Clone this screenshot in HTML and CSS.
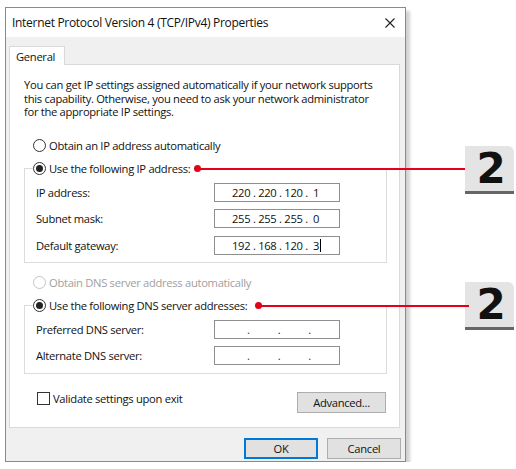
FILE: index.html
```html
<!DOCTYPE html>
<html lang="en">
<head>
<meta charset="utf-8">
<title>Internet Protocol Version 4 (TCP/IPv4) Properties</title>
<link rel="stylesheet" href="styles.css">
</head>
<body>
<div class="page">
  <div class="dialog">
    <div class="titlebar">
      <span class="title">Internet Protocol Version 4 (TCP/IPv4) Properties</span>
      <svg class="close" width="10" height="10" viewBox="0 0 10 10"><path d="M0.5 0.5 L9.5 9.5 M9.5 0.5 L0.5 9.5" stroke="#222" stroke-width="1.1" fill="none"/></svg>
    </div>
    <div class="tabs"><div class="tab">General</div></div>
    <div class="panel">
      <p class="desc">You can get IP settings assigned automatically if your network supports<br>this capability. Otherwise, you need to ask your network administrator<br>for the appropriate IP settings.</p>
      <div class="option"><span class="radio"></span><span>Obtain an IP address automatically</span></div>
      <fieldset class="group">
        <legend class="option"><span class="radio checked"></span><span>Use the following IP address:</span><span class="dot dot-ip"><span class="line line-ip"></span></span></legend>
        <div class="field"><span class="label">IP address:</span><span class="ip"><span class="ipv">220 . 220 . 120 .&nbsp; 1</span></span></div>
        <div class="field"><span class="label">Subnet mask:</span><span class="ip"><span class="ipv">255 . 255 . 255 .&nbsp; 0</span></span></div>
        <div class="field"><span class="label">Default gateway:</span><span class="ip"><span class="ipv">192 . 168 . 120 .&nbsp; 3<span class="caret"></span></span></span></div>
      </fieldset>
      <div class="option disabled"><span class="radio"></span><span>Obtain DNS server address automatically</span></div>
      <fieldset class="group group-dns">
        <legend class="option"><span class="radio checked"></span><span>Use the following DNS server addresses:</span><span class="dot dot-dns"><span class="line line-dns"></span></span></legend>
        <div class="field"><span class="label">Preferred DNS server:</span><span class="ip empty"><span>.</span><span>.</span><span>.</span></span></div>
        <div class="field"><span class="label">Alternate DNS server:</span><span class="ip empty"><span>.</span><span>.</span><span>.</span></span></div>
      </fieldset>
      <div class="bottomrow">
        <div class="check"><span class="box"></span><span>Validate settings upon exit</span></div>
        <button class="btn adv" type="button">Advanced...</button>
      </div>
    </div>
    <div class="footer">
      <button class="btn ok" type="button">OK</button>
      <button class="btn" type="button">Cancel</button>
    </div>
  </div>
  <div class="badges">
    <div class="badge">2</div>
    <div class="badge">2</div>
  </div>
</div>
</body>
</html>
```
FILE: styles.css
```css
* { box-sizing: border-box; }
html, body { margin: 0; padding: 0; background: #fff; }
body {
  font-family: "Open Sans", "Noto Sans", sans-serif;
  font-size: 11.2px;
  letter-spacing: -0.3px;
  color: #111;
}
.page { display: flex; align-items: flex-start; padding: 7px 0 0 5px; }
.dialog {
  width: 401px;
  border: 1px solid #8a8a8a;
  background: #f0f0f0;
  box-shadow: 4px 4px 3px rgba(0,0,0,0.18);
  padding-bottom: 2px;
}
.titlebar {
  height: 29px;
  background: #fff;
  display: flex;
  align-items: center;
  justify-content: space-between;
  padding: 0 10px 0 6px;
  font-size: 12px;
}
.close { display: block; }
.tabs { margin-top: 9px; padding-left: 3px; display: flex; }
.tab {
  height: 19px;
  padding: 1px 9px 0 6px;
  border: 1px solid #d9d9d9;
  border-bottom: none;
  background: #fff;
  margin-bottom: -1px;
  position: relative;
  z-index: 1;
  line-height: 17px;
}
.panel {
  margin: 0 5px 0 3px;
  height: 364px;
  border: 1px solid #d9d9d9;
  background: #fff;
  padding: 13px 12px 0 14px;
}
.desc { margin: 0; line-height: 13.6px; white-space: nowrap; }
.option { display: flex; align-items: center; gap: 3px; height: 16px; line-height: 16px; }
.panel > .option { margin: 19px 0 0 9px; }
.panel > .option.disabled { margin-top: 12px; }
.disabled { color: #a0a0a0; }
.radio {
  width: 13px; height: 13px;
  border: 1px solid #333;
  border-radius: 50%;
  display: flex; align-items: center; justify-content: center;
  flex: none;
}
.disabled .radio { border-color: #c4c4c4; }
.radio.checked::after { content: ""; width: 7px; height: 7px; border-radius: 50%; background: #222; }
.group {
  margin: 7px 0 0 0;
  padding: 0 0 7px 11px;
  border: 1px solid #dcdcdc;
  min-width: 0;
  display: flex; flex-direction: column; gap: 7.5px;
}
.group-dns { padding-bottom: 8px; gap: 7px; }
.group legend { padding: 0 2px 0 0; margin-left: -3px; margin-bottom: 6px; }
.dot {
  width: 7px; height: 7px; border-radius: 50%;
  background: #e3001b;
  position: relative;
  flex: none;
}
.dot-ip { margin-left: 1px; }
.dot-dns { margin-left: 5px; }
.line { position: absolute; left: 3px; top: 2.5px; height: 2px; background: #e3001b; }
.line-ip { width: 268px; }
.line-dns { width: 211px; }
.field { display: flex; align-items: center; height: 19px; }
.label { width: 178px; }
.ip {
  width: 126px; height: 19px;
  border: 1px solid #8e8e8e;
  display: flex; align-items: center;
  line-height: 17px;
}
.ipv { padding-left: 17px; white-space: pre; position: relative; }
.caret { display: inline-block; width: 1px; height: 13px; background: #000; vertical-align: -2px; margin-left: 1px; }
.ip.empty { padding-left: 32px; gap: 28px; color: #333; }
.bottomrow { display: flex; justify-content: space-between; align-items: flex-start; margin-top: 18px; padding-right: 1px; }
.check { display: flex; align-items: center; gap: 3px; margin-left: 13px; height: 14px; line-height: 14px; }
.box { width: 13px; height: 13px; border: 1px solid #333; flex: none; }
.btn {
  font: inherit;
  letter-spacing: inherit;
  color: #111;
  background: #e1e1e1;
  border: 1px solid #adadad;
  height: 21px;
  padding: 0;
  width: 74px;
  line-height: 19px;
}
.adv { width: 89px; }
.ok { border-color: #0078d7; box-shadow: inset 0 0 0 1px #0078d7; }
.footer { display: flex; justify-content: flex-end; gap: 9px; margin-top: 10px; padding-right: 4px; }
.badges { margin-left: 59px; padding-top: 139px; display: flex; flex-direction: column; gap: 88px; }
.badge {
  width: 49px; height: 48px;
  background: #e4e4e4;
  border-top-right-radius: 6px;
  border-bottom: 3px solid #666;
  font-family: "DejaVu Sans", sans-serif;
  font-weight: bold;
  font-size: 42px;
  letter-spacing: 0;
  line-height: 46px;
  text-align: center;
  color: #111;
  padding-left: 3px;
}
```
